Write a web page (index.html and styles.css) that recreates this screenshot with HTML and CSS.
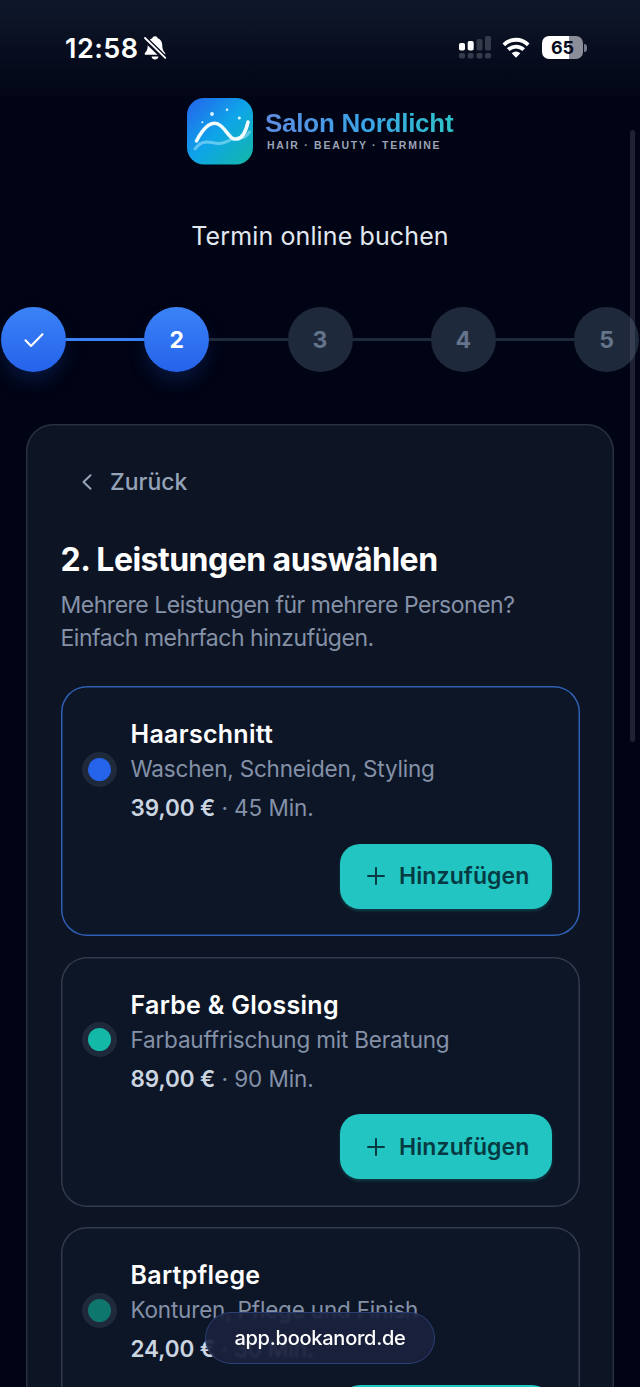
FILE: index.html
```html
<!DOCTYPE html>
<html lang="de">
<head>
<meta charset="utf-8">
<meta name="viewport" content="width=device-width, initial-scale=1">
<title>Salon Nordlicht – Termin online buchen</title>
<link rel="stylesheet" href="styles.css">
</head>
<body>
<div class="screen">
  <div class="status">
    <div class="status-left">
      <span class="clock">12:58</span>
      <svg class="bell" width="24" height="26" viewBox="0 0 24 26">
        <path fill="#fff" d="M12 1.2c1.5 0 2.4.8 2.7 2 2.9 1 4.4 3.500 4.500 6.500.1 4.200.7 6 2.700 8 .9 1 .4 2.100-.9 2.100H3c-1.300 0-1.800-1.100-.9-2.100 2-2 2.600-3.800 2.700-8 .1-3 1.600-5.500 4.500-6.500.3-1.200 1.200-2 2.700-2zM8.500 21.400h7c-.4 1.900-1.700 3-3.500 3s-3.100-1.100-3.500-3z"/>
        <path d="M1.500 3.300 22 23.300" stroke="#080e20" stroke-width="5.500"/>
        <path d="M2 3 22.300 22.800" stroke="#fff" stroke-width="1.800" stroke-linecap="round"/>
      </svg>
    </div>
    <div class="status-right">
      <svg width="32" height="24" viewBox="0 0 32 24">
        <g fill="#fff"><rect x="0" y="7" width="6" height="7.500" rx="1.800"/><rect x="8.700" y="5" width="6" height="9.500" rx="1.800"/></g>
        <g fill="#363b4b"><rect x="17.500" y="3" width="6" height="11.500" rx="1.800"/><rect x="26" y="0" width="6" height="14.500" rx="1.800"/><rect x="0" y="17" width="6" height="5.500" rx="1.800"/><rect x="8.700" y="17" width="6" height="5.500" rx="1.800"/><rect x="17.500" y="17" width="6" height="5.500" rx="1.800"/><rect x="26" y="17" width="6" height="5.500" rx="1.800"/></g>
      </svg>
      <svg class="wifi" width="28" height="22" viewBox="0 0 28 22">
        <g fill="none" stroke="#fff" stroke-width="3.800"><path d="M1.800 7.800a17.300 17.300 0 0 1 24.400 0"/><path d="M6.300 12.700a11 11 0 0 1 15.400 0"/></g>
        <path fill="#fff" d="M9.700 16.200a6.200 6.200 0 0 1 8.600 0L14 20.800z"/>
      </svg>
      <div class="battery"><span>65</span></div><i class="battery-tip"></i>
    </div>
  </div>

  <header class="brand">
    <svg width="66" height="67" viewBox="0 0 66 67">
      <defs>
        <linearGradient id="tile" x1="0" y1="0" x2="1" y2="1"><stop offset="0" stop-color="#2563eb"/><stop offset=".5" stop-color="#0ea5e9"/><stop offset="1" stop-color="#14b8a6"/></linearGradient>
      </defs>
      <rect width="66" height="66.500" rx="17" fill="url(#tile)"/>
      <path d="M8 51C13 44 18 43 25 44.500C34 46.500 38 45 44 41.500C51 38 57 43 62.500 34" fill="none" stroke="#a5e5fb" stroke-opacity=".55" stroke-width="3" stroke-linecap="round"/>
      <path d="M9.500 43C17 28 26 21 34 28C41 34 43 42 50 41C56 40 59 33 61 24" fill="none" stroke="#f2fcff" stroke-width="3.500" stroke-linecap="round"/>
      <g fill="#d9f5ff"><circle cx="25" cy="16" r="1.900"/><circle cx="40" cy="11.800" r="1.300"/><circle cx="52.300" cy="20" r="1.600"/><circle cx="15.300" cy="24.300" r="1"/></g>
    </svg>
    <div class="brand-text">
      <div class="brand-name">Salon Nordlicht</div>
      <div class="brand-sub">HAIR · BEAUTY · TERMINE</div>
    </div>
  </header>

  <h1 class="page-title">Termin online buchen</h1>

  <div class="stepper">
    <div class="step on"><svg width="24" height="20" viewBox="0 0 24 20"><path d="M3.500 10.300 9 16 20.500 4.200" fill="none" stroke="#fff" stroke-width="2.100" stroke-linecap="round" stroke-linejoin="round"/></svg></div>
    <div class="bar done"></div>
    <div class="step on">2</div>
    <div class="bar"></div>
    <div class="step">3</div>
    <div class="bar"></div>
    <div class="step">4</div>
    <div class="bar"></div>
    <div class="step">5</div>
  </div>

  <main class="panel">
    <div class="back"><svg width="12" height="18" viewBox="0 0 12 18"><path d="M9.500 2.200 2.500 9l7 6.800" fill="none" stroke="#94a3b8" stroke-width="2" stroke-linecap="round" stroke-linejoin="round"/></svg><span>Zurück</span></div>
    <h2 class="heading">2. Leistungen auswählen</h2>
    <p class="intro">Mehrere Leistungen für mehrere Personen?<br>Einfach mehrfach hinzufügen.</p>

    <div class="services">
      <section class="service selected">
        <div class="info"><i class="dot blue"></i><div>
          <h3>Haarschnitt</h3><p class="desc">Waschen, Schneiden, Styling</p>
          <p class="meta"><b>39,00 €</b> · 45 Min.</p></div></div>
        <button class="add"><svg width="20" height="20" viewBox="0 0 20 20"><path d="M10 2v16M2 10h16" stroke="#063a43" stroke-width="2" stroke-linecap="round"/></svg><span>Hinzufügen</span></button>
      </section>
      <section class="service">
        <div class="info"><i class="dot teal"></i><div>
          <h3>Farbe &amp; Glossing</h3><p class="desc">Farbauffrischung mit Beratung</p>
          <p class="meta"><b>89,00 €</b> · 90 Min.</p></div></div>
        <button class="add"><svg width="20" height="20" viewBox="0 0 20 20"><path d="M10 2v16M2 10h16" stroke="#063a43" stroke-width="2" stroke-linecap="round"/></svg><span>Hinzufügen</span></button>
      </section>
      <section class="service">
        <div class="info"><i class="dot green"></i><div>
          <h3>Bartpflege</h3><p class="desc">Konturen, Pflege und Finish</p>
          <p class="meta"><b>24,00 €</b> · 30 Min.</p></div></div>
        <button class="add" aria-label="Hinzufügen"></button>
      </section>
    </div>
  </main>

  <div class="scrollbar"></div>
  <div class="url"><span>app.bookanord.de</span></div>
</div>
</body>
</html>
```
FILE: styles.css
```css
* { box-sizing: border-box; margin: 0; padding: 0; }
html, body { height: 1387px; overflow: hidden; background: #010414; }
body { font-family: Inter, "Liberation Sans", sans-serif; color: #fff; }
svg { display: block; flex: none; }
.screen {
  position: relative; width: 640px; height: 1387px; overflow: hidden;
  background: linear-gradient(#0f182b 0, #0b1224 30px, #050a1b 70px, #010414 105px);
}

.status { height: 98px; padding: 35px 53px 0 65px; display: flex; justify-content: space-between; align-items: flex-start; }
.status-left { display: flex; gap: 5px; align-items: center; height: 26px; }
.clock { font-size: 27px; font-weight: 600; letter-spacing: 0.500px; width: 73px; white-space: nowrap; }
.status-right { display: flex; align-items: center; height: 24px; padding-top: 1px; }
.wifi { margin: 0 12px 0 11px; }
.battery { width: 41px; height: 23px; border-radius: 7px; background: linear-gradient(90deg, #fff 65%, #8b8e98 65%); color: #070c1c; font-size: 18px; font-weight: 700; line-height: 23px; text-align: center; }
.battery-tip { width: 3px; height: 8px; margin-left: 1px; border-radius: 0 3px 3px 0; background: #777b87; }

.brand { height: 67px; padding-left: 187px; display: flex; gap: 12px; }
.brand-text { padding-top: 10px; font-family: "Liberation Sans", Arial, sans-serif; }
.brand-name { width: 196px; font-size: 26px; font-weight: 700; letter-spacing: -0.250px; line-height: 30px; white-space: nowrap; color: transparent; background: linear-gradient(90deg, #608be0, #3ba4e8 50%, #2dc6c6); -webkit-background-clip: text; background-clip: text; }
.brand-sub { margin-top: 1px; padding-left: 2px; font-size: 10.500px; font-weight: 700; line-height: 12px; letter-spacing: 1.730px; color: #9ba3b6; white-space: nowrap; }

.page-title { margin-top: 53px; height: 36px; line-height: 36px; text-align: center; font-size: 25px; font-weight: 400; letter-spacing: 0.120px; color: #e2e8f0; }

.stepper { margin-top: 53px; padding-left: 1px; width: 639px; height: 65px; display: flex; align-items: center; }
.step { flex: none; width: 65px; height: 65px; border-radius: 50%; display: flex; align-items: center; justify-content: center; background: #1e293b; color: #64748b; font-size: 23px; font-weight: 700; }
.step.on { color: #fff; background: linear-gradient(#3b82f6, #2563eb); box-shadow: 0 11px 20px -3px rgba(37, 99, 235, .22); }
.bar { flex: 1; height: 3px; background: #1e293b; }
.bar.done { background: #3b82f6; }

.panel { margin: 52px 26px 0; height: 1100px; padding: 38px 34.500px 0; border-radius: 27px; background: #0d1424; box-shadow: inset 0 0 0 1.500px #29313f; }
.back { display: flex; align-items: center; gap: 17.500px; height: 40px; padding-left: 20px; font-size: 23px; font-weight: 500; color: #94a3b8; }
.heading { margin-top: 38px; height: 40px; line-height: 40px; font-size: 32px; font-weight: 700; letter-spacing: -0.530px; white-space: nowrap; }
.intro { margin-top: 9px; font-size: 23px; line-height: 32.500px; letter-spacing: -0.480px; color: #8491a7; white-space: nowrap; }
.services { margin-top: 32px; display: flex; flex-direction: column; gap: 20.500px; }
.service { height: 250px; padding: 30px 27.500px 27.500px 21px; border-radius: 26px; background: #0d1627; box-shadow: inset 0 0 0 1.500px #323b4b; display: flex; flex-direction: column; justify-content: space-between; }
.service.selected { box-shadow: inset 0 0 0 1.500px #2f5fb3; }
.info { display: flex; align-items: center; gap: 14px; white-space: nowrap; }
.dot { width: 35px; height: 35px; margin-bottom: 2px; border-radius: 50%; border: 6px solid #1e293b; }
.blue { background: #2563eb; }
.teal { background: #14b8a6; }
.green { background: #0f766e; }
.service h3 { font-size: 25px; font-weight: 600; line-height: 36px; letter-spacing: 0.280px; }
.desc { font-size: 22.500px; line-height: 34px; letter-spacing: -0.190px; color: #8491a7; }
.meta { padding-top: 6px; font-size: 22.500px; line-height: 32px; letter-spacing: -0.080px; color: #8491a7; }
.meta b { font-weight: 600; color: #cbd5e1; }
.add { align-self: flex-end; width: 212px; height: 65px; border: 0; border-radius: 20px; background: #22c5c1; box-shadow: 0 2px 3px rgba(20, 184, 166, .25); color: #063a43; font: 600 23px Inter, sans-serif; letter-spacing: 0.100px; display: flex; align-items: center; padding-left: 26px; gap: 13px; white-space: nowrap; }

.scrollbar { position: absolute; left: 630px; top: 130px; width: 5px; height: 612px; border-radius: 3px; background: rgba(150, 155, 175, .2); }
.url { position: absolute; left: 205px; top: 1312px; width: 230px; height: 52px; border-radius: 26px; border: 1.500px solid #2d4075; background: rgba(27, 34, 63, .87); backdrop-filter: blur(1.200px); font-size: 20px; font-weight: 500; letter-spacing: -0.250px; line-height: 50px; text-align: center; white-space: nowrap; }
```
